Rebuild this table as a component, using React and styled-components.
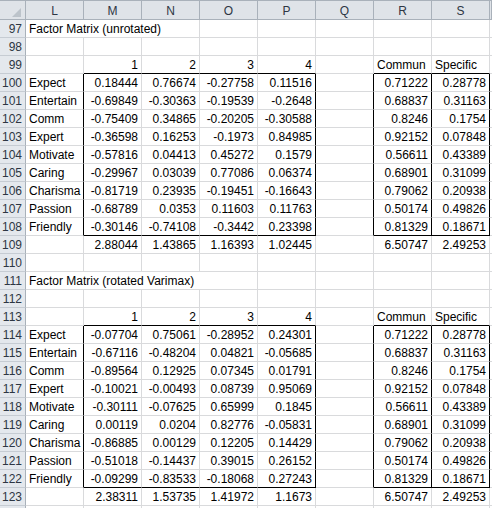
import React from 'react';
import styled, { createGlobalStyle } from 'styled-components';

const GlobalStyle = createGlobalStyle`
  html, body {
    margin: 0;
    padding: 0;
    background: #ffffff;
    overflow: hidden;
  }
  body {
    width: 492px;
    height: 508px;
  }
`;

// T only peeks in at the right edge, so it gets no letter
const COLS = ['L', 'M', 'N', 'O', 'P', 'Q', 'R', 'S', ''];
const GRID = '#d9dadc';
const HEAD_LINE = '#a9b1ba';

const Sheet = styled.div`
  display: grid;
  grid-template-columns: 26px repeat(8, 58px) 2px;
  grid-auto-rows: 18px;
  grid-template-rows: 20px;
  font-family: 'Liberation Sans', Arial, sans-serif;
  font-size: 12px;
  color: #000;
`;

const Corner = styled.div`
  box-sizing: border-box;
  background: #dfe3e8;
  border-top: 1px solid ${HEAD_LINE};
  border-right: 1px solid ${HEAD_LINE};
  border-bottom: 1px solid ${HEAD_LINE};
  display: flex;
  justify-content: flex-end;
  align-items: flex-end;
  padding: 0 4px 2px 0;
`;

const Triangle = styled.div`
  width: 0;
  height: 0;
  border-left: 9px solid transparent;
  border-bottom: 9px solid #bcc3ca;
`;

const ColHeader = styled.div`
  box-sizing: border-box;
  background: #dfe3e8;
  border-top: 1px solid ${HEAD_LINE};
  border-right: 1px solid ${HEAD_LINE};
  border-bottom: 1px solid ${HEAD_LINE};
  display: flex;
  align-items: center;
  justify-content: center;
  color: #2d3643;
  padding-top: 1px;
`;

const RowHeader = styled.div`
  box-sizing: border-box;
  background: #e4e8ed;
  border-right: 1px solid ${HEAD_LINE};
  border-bottom: 1px solid #c6ccd3;
  display: flex;
  align-items: flex-end;
  justify-content: flex-end;
  padding: 0 3px 1px 0;
  color: #2d3643;
`;

const Cell = styled.div`
  box-sizing: border-box;
  border-right: 1px solid ${(p) => (p.$right ? '#000' : GRID)};
  border-bottom: 1px solid ${(p) => (p.$bottom ? '#000' : GRID)};
  display: flex;
  align-items: flex-end;
  justify-content: ${(p) => (p.$num ? 'flex-end' : 'flex-start')};
  padding: 0 3px 1px 3px;
  white-space: nowrap;
  overflow: visible;
  grid-column: ${(p) => (p.$span ? `span ${p.$span}` : 'auto')};
`;

const unrotated = [
  ['Expect', 0.18444, 0.76674, -0.27758, 0.11516, 0.71222, 0.28778],
  ['Entertain', -0.69849, -0.30363, -0.19539, -0.2648, 0.68837, 0.31163],
  ['Comm', -0.75409, 0.34865, -0.20205, -0.30588, 0.8246, 0.1754],
  ['Expert', -0.36598, 0.16253, -0.1973, 0.84985, 0.92152, 0.07848],
  ['Motivate', -0.57816, 0.04413, 0.45272, 0.1579, 0.56611, 0.43389],
  ['Caring', -0.29967, 0.03039, 0.77086, 0.06374, 0.68901, 0.31099],
  ['Charisma', -0.81719, 0.23935, -0.19451, -0.16643, 0.79062, 0.20938],
  ['Passion', -0.68789, 0.0353, 0.11603, 0.11763, 0.50174, 0.49826],
  ['Friendly', -0.30146, -0.74108, -0.3442, 0.23398, 0.81329, 0.18671],
];

const rotated = [
  ['Expect', -0.07704, 0.75061, -0.28952, 0.24301, 0.71222, 0.28778],
  ['Entertain', -0.67116, -0.48204, 0.04821, -0.05685, 0.68837, 0.31163],
  ['Comm', -0.89564, 0.12925, 0.07345, 0.01791, 0.8246, 0.1754],
  ['Expert', -0.10021, -0.00493, 0.08739, 0.95069, 0.92152, 0.07848],
  ['Motivate', -0.30111, -0.07625, 0.65999, 0.1845, 0.56611, 0.43389],
  ['Caring', 0.00119, 0.0204, 0.82776, -0.05831, 0.68901, 0.31099],
  ['Charisma', -0.86885, 0.00129, 0.12205, 0.14429, 0.79062, 0.20938],
  ['Passion', -0.51018, -0.14437, 0.39015, 0.26152, 0.50174, 0.49826],
  ['Friendly', -0.09299, -0.83533, -0.18068, 0.27243, 0.81329, 0.18671],
];

// build rows: each row is an array of cells (L..T); a cell is null, a string or a number
function matrixRows(title, data, sums) {
  const rows = [];
  rows.push({ title, span: title.length > 26 ? 4 : 3 });
  rows.push({ cells: [] });
  rows.push({ cells: [null, 1, 2, 3, 4, null, 'Commun', 'Specific'] });
  data.forEach((d) => rows.push({ cells: [d[0], d[1], d[2], d[3], d[4], null, d[5], d[6]] }));
  rows.push({ cells: [null, ...sums] });
  return rows;
}

const rows = [
  ...matrixRows('Factor Matrix (unrotated)', unrotated, [2.88044, 1.43865, 1.16393, 1.02445, null, 6.50747, 2.49253]),
  { cells: [] },
  ...matrixRows('Factor Matrix (rotated Varimax)', rotated, [2.38311, 1.53735, 1.41972, 1.1673, null, 6.50747, 2.49253]),
  { cells: [], hideNumber: true },
];

// black boxes, as [firstRow, lastRow, firstCol, lastCol, innerVertical] (row index 0 = row 97, col index 0 = L)
const boxes = [
  [3, 11, 1, 4, false],
  [3, 11, 6, 7, true],
  [17, 25, 1, 4, false],
  [17, 25, 6, 7, true],
];

function rightBlack(r, c) {
  return boxes.some(([r1, r2, c1, c2, inner]) =>
    r >= r1 && r <= r2 && (c === c2 || c + 1 === c1 || (inner && c >= c1 && c < c2)));
}

function bottomBlack(r, c) {
  return boxes.some(([r1, r2, c1, c2]) => c >= c1 && c <= c2 && (r === r2 || r + 1 === r1));
}

export default function App() {
  return (
    <>
      <GlobalStyle />
      <Sheet>
        <Corner><Triangle /></Corner>
        {COLS.map((c, i) => <ColHeader key={i}>{c}</ColHeader>)}
        {rows.map((row, r) => {
          const out = [<RowHeader key={`h${r}`}>{row.hideNumber ? '' : 97 + r}</RowHeader>];
          if (row.title) {
            out.push(
              <Cell key={`t${r}`} $span={row.span} $bottom={bottomBlack(r, 0)}>
                {row.title}
              </Cell>
            );
            for (let c = row.span; c < COLS.length; c++) {
              out.push(<Cell key={`${r}-${c}`} $right={rightBlack(r, c)} $bottom={bottomBlack(r, c)} />);
            }
            return out;
          }
          for (let c = 0; c < COLS.length; c++) {
            const v = row.cells[c];
            out.push(
              <Cell
                key={`${r}-${c}`}
                $num={typeof v === 'number'}
                $right={rightBlack(r, c)}
                $bottom={bottomBlack(r, c)}
              >
                {v == null ? '' : String(v)}
              </Cell>
            );
          }
          return out;
        })}
      </Sheet>
    </>
  );
}
